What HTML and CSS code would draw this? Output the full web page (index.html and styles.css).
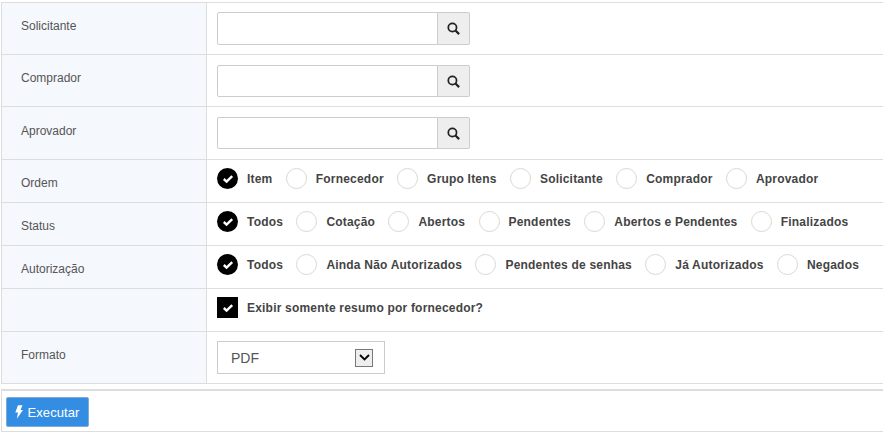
FILE: index.html
```html
<!DOCTYPE html>
<html lang="pt-BR">
<head>
  <meta charset="UTF-8">
  <title>Relatório</title>
  <link rel="stylesheet" href="styles.css">
</head>
<body>

<svg class="icon-defs" width="0" height="0">
  <symbol id="check" viewBox="0 0 12 10">
    <path d="M1.8 5 4.6 7.6 10.2 2.2" fill="none" stroke="#fff" stroke-width="2.4"/>
  </symbol>
  <symbol id="search" viewBox="0 0 12 12">
    <circle cx="5" cy="5" r="3.8" fill="none" stroke="#222" stroke-width="1.6"/>
    <path d="M7.8 7.8 11.2 11.2" stroke="#222" stroke-width="2"/>
  </symbol>
</svg>

<div class="form">
  <div class="row row-lookup row-first">
    <div class="label">Solicitante</div>
    <div class="field">
      <div class="lookup">
        <input type="text">
        <button class="btn-search"><svg width="13" height="13"><use href="#search"/></svg></button>
      </div>
    </div>
  </div>
  <div class="row row-lookup">
    <div class="label">Comprador</div>
    <div class="field">
      <div class="lookup">
        <input type="text">
        <button class="btn-search"><svg width="13" height="13"><use href="#search"/></svg></button>
      </div>
    </div>
  </div>
  <div class="row row-lookup row-tall">
    <div class="label">Aprovador</div>
    <div class="field">
      <div class="lookup">
        <input type="text">
        <button class="btn-search"><svg width="13" height="13"><use href="#search"/></svg></button>
      </div>
    </div>
  </div>

  <div class="row row-options">
    <div class="label">Ordem</div>
    <div class="field options">
      <span class="radio on"><svg width="12" height="10"><use href="#check"/></svg></span><span class="opt">Item</span>
      <span class="radio"></span><span class="opt">Fornecedor</span>
      <span class="radio"></span><span class="opt">Grupo Itens</span>
      <span class="radio"></span><span class="opt">Solicitante</span>
      <span class="radio"></span><span class="opt">Comprador</span>
      <span class="radio"></span><span class="opt">Aprovador</span>
    </div>
  </div>
  <div class="row row-options">
    <div class="label">Status</div>
    <div class="field options">
      <span class="radio on"><svg width="12" height="10"><use href="#check"/></svg></span><span class="opt">Todos</span>
      <span class="radio"></span><span class="opt">Cotação</span>
      <span class="radio"></span><span class="opt">Abertos</span>
      <span class="radio"></span><span class="opt">Pendentes</span>
      <span class="radio"></span><span class="opt">Abertos e Pendentes</span>
      <span class="radio"></span><span class="opt">Finalizados</span>
    </div>
  </div>
  <div class="row row-options">
    <div class="label">Autorização</div>
    <div class="field options">
      <span class="radio on"><svg width="12" height="10"><use href="#check"/></svg></span><span class="opt">Todos</span>
      <span class="radio"></span><span class="opt">Ainda Não Autorizados</span>
      <span class="radio"></span><span class="opt">Pendentes de senhas</span>
      <span class="radio"></span><span class="opt">Já Autorizados</span>
      <span class="radio"></span><span class="opt">Negados</span>
    </div>
  </div>
  <div class="row row-options">
    <div class="label"></div>
    <div class="field options">
      <span class="checkbox"><svg width="12" height="10"><use href="#check"/></svg></span><span class="opt">Exibir somente resumo por fornecedor?</span>
    </div>
  </div>

  <div class="row row-format">
    <div class="label">Formato</div>
    <div class="field">
      <div class="select">
        <span>PDF</span>
        <span class="select-arrow">
          <svg width="11" height="7" viewBox="0 0 11 7"><path d="M1 1 5.5 5.5 10 1" fill="none" stroke="#000" stroke-width="1.8"/></svg>
        </span>
      </div>
    </div>
  </div>
</div>

<div class="footer">
  <button class="btn-run">
    <svg width="8" height="14" viewBox="0 0 7 12"><path d="M2.6 0H6.6L4.8 4.2H7L1.6 12 2.7 6.4H.3Z" fill="#fff"/></svg>
    Executar
  </button>
</div>

</body>
</html>
```

FILE: styles.css
```css
body {
  margin: 0;
  padding: 2px 0 0 1px;
  background: #fff;
  font-family: "Liberation Sans", Arial, sans-serif;
  font-size: 12px;
  color: #444;
}
.icon-defs {
  position: absolute;
}
.form {
  border-top: 1px solid #ddd;
  border-left: 1px solid #ddd;
  width: 882px;
  box-sizing: border-box;
}
.row {
  display: flex;
  border-bottom: 1px solid #ddd;
}
.row-lookup {
  height: 51px;
}
.row-tall {
  height: 52px;
}
.row-options {
  height: 42px;
}
.row-format {
  height: 51px;
}
.label {
  width: 205px;
  flex: none;
  box-sizing: border-box;
  background: #f5f8fd;
  border-right: 1px solid #ddd;
  padding-left: 19px;
  color: #555;
}
.row-lookup .label {
  padding-top: 16px;
}
.row-tall .label {
  padding-top: 17px;
}
.row-options .label {
  padding-top: 16px;
}
.row-format .label {
  padding-top: 16px;
}
.field {
  flex: 1;
  padding-left: 10px;
}
.row-lookup .field {
  padding-top: 10px;
}
.row-first .field {
  padding-top: 9px;
}
.row-format .field {
  padding-top: 9px;
}

.lookup {
  display: flex;
  width: 253px;
  height: 32px;
}
.row-first .lookup {
  height: 33px;
}
.lookup input {
  flex: 1;
  min-width: 0;
  margin: 0;
  padding: 0;
  border: 1px solid #ccc;
  border-radius: 2px 0 0 2px;
  background: #fff;
}
.btn-search {
  width: 32px;
  padding: 0;
  border: 1px solid #ccc;
  border-left: none;
  border-radius: 0 2px 2px 0;
  background: #eee;
  display: flex;
  align-items: center;
  justify-content: center;
}

.options {
  display: flex;
  align-items: flex-start;
  padding-top: 8px;
}
.opt {
  font-weight: bold;
  letter-spacing: .2px;
  line-height: 22px;
  margin-right: 13.3px;
  white-space: nowrap;
}
.radio, .checkbox {
  flex: none;
  width: 21px;
  height: 21px;
  box-sizing: border-box;
  margin-right: 9px;
  display: flex;
  align-items: center;
  justify-content: center;
}
.radio {
  border: 1px solid #dcd8d0;
  border-radius: 50%;
}
.radio.on {
  border: none;
  background: #000;
}
.checkbox {
  background: #000;
}

.select {
  width: 168px;
  height: 33px;
  box-sizing: border-box;
  border: 1px solid #ccc;
  display: flex;
  align-items: center;
  justify-content: space-between;
  padding: 0 11px 0 13px;
  font-size: 14px;
  color: #555;
}
.select-arrow {
  width: 18px;
  height: 18px;
  box-sizing: border-box;
  border: 1px solid #777;
  background: #eee;
  display: flex;
  align-items: center;
  justify-content: center;
}

.footer {
  margin-top: 5px;
  border-top: 2px solid #ddd;
  border-left: 1px solid #ddd;
  border-bottom: 1px solid #ddd;
  width: 882px;
  box-sizing: border-box;
  height: 43px;
  padding: 6px 0 0 4px;
}
.btn-run {
  height: 30px;
  width: 83px;
  padding: 0;
  border: 1px solid #7fa9d6;
  border-radius: 2px;
  background: #338ee3;
  color: #fff;
  font-family: inherit;
  font-size: 13px;
  letter-spacing: .1px;
  display: flex;
  align-items: center;
  justify-content: center;
  gap: 4px;
}
```
